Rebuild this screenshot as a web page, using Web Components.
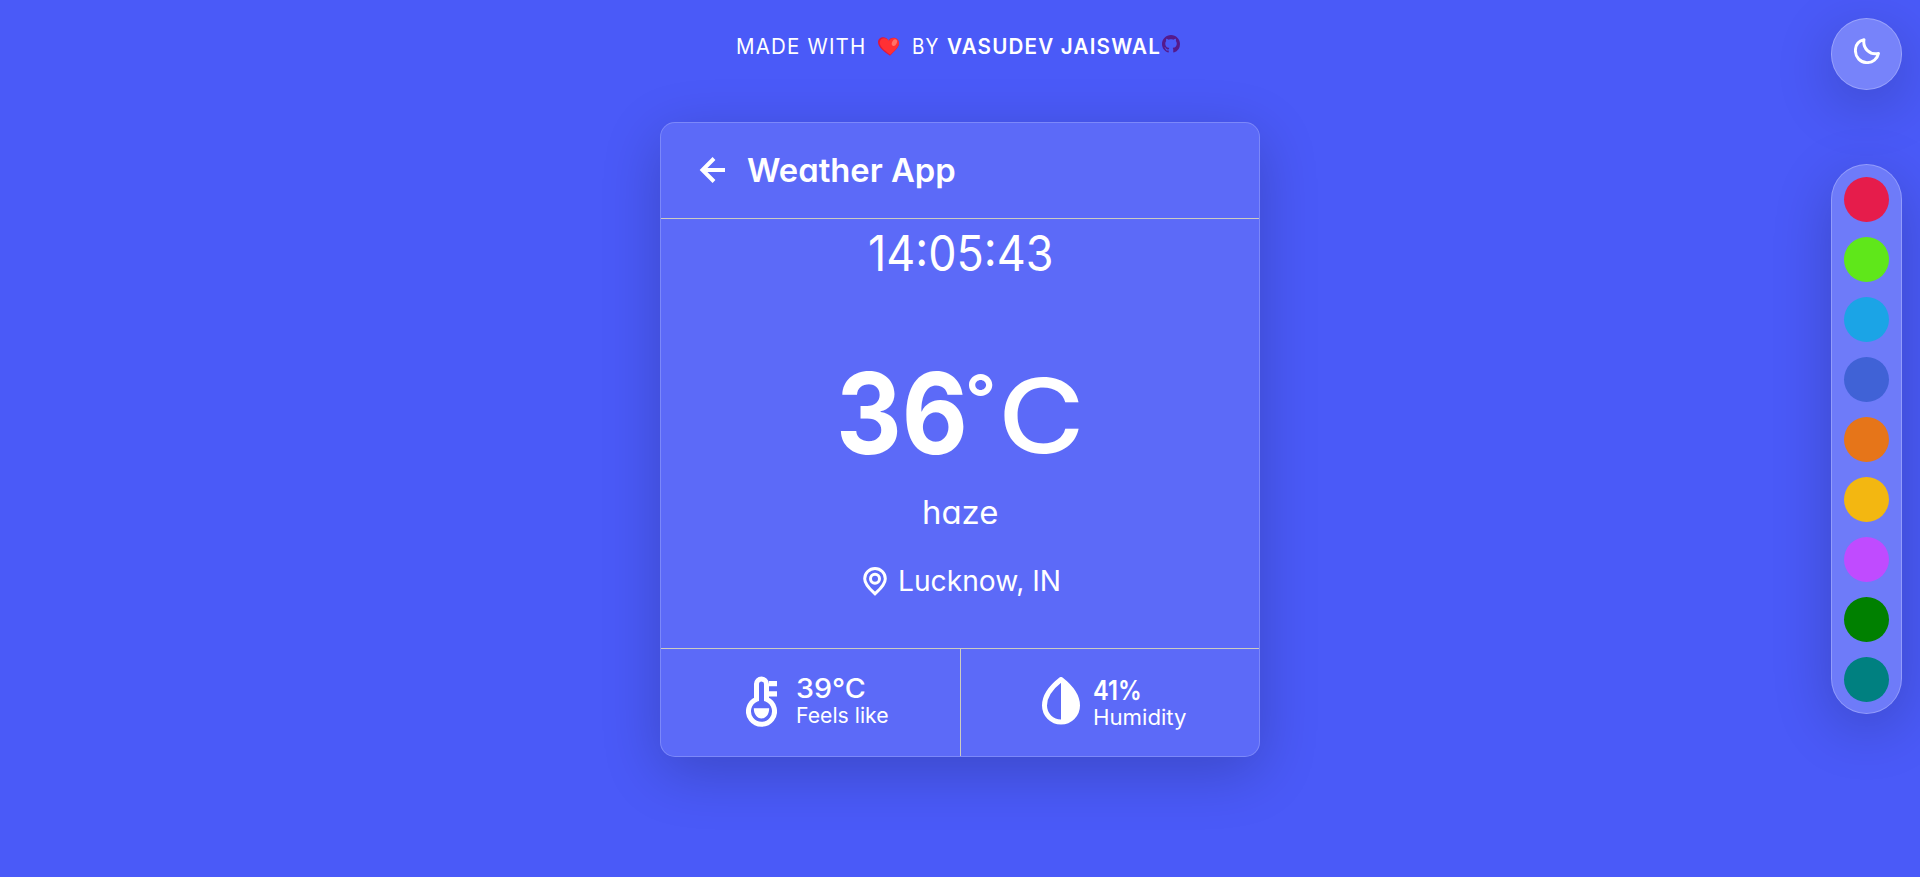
<!DOCTYPE html>
<html lang="en">
<head>
<meta charset="utf-8">
<title>Weather App</title>
<style>
html,body{margin:0;height:100%;overflow:hidden;background:#4a5af8;color:#fff;font-family:Inter,"Open Sans",sans-serif;font-feature-settings:"cv11";}
</style>
</head>
<body>
<weather-page></weather-page>
<script>
const define=(name,html,after)=>customElements.define(name,class extends HTMLElement{
  constructor(){super();this.attachShadow({mode:"open"}).innerHTML=html;}
  connectedCallback(){if(after)after(this);}
});

/* One line of text stretched to the width given in its w attribute. */
define("fit-text",`<style>:host{display:block;white-space:nowrap;overflow:visible;flex:none}
span{display:inline-block;transform-origin:0 50%}</style><span><slot></slot></span>`,el=>{
  const w=+el.getAttribute("w");
  el.style.width=w+"px";
  const s=el.shadowRoot.querySelector("span");
  s.style.transform="scaleX("+(w/s.offsetWidth)+")";
});

define("page-credit",`<style>
:host{display:flex;justify-content:flex-start;height:122px;box-sizing:border-box;padding:30px 0 0 736px;font-size:21px;line-height:34px;letter-spacing:1.200px}
.heart{width:21px;height:19px;margin:7px 13px 0 12px}
b{font-weight:600}.git{width:18px;height:18px;margin:5px 0 0 1px}
fit-text+fit-text{margin-left:8px}
</style>
<fit-text w="130">MADE WITH</fit-text>
<svg class="heart" viewBox="0 0 21 19"><path d="M10.5 4C12.300-1 21 0 21 6.500 20.800 11 15 15.500 12 18.700 8 16 0 11 0 5.300 0-.5 8.500-1.500 10.500 4z" fill="#dd173f"/><path d="M11 4C12.800-.6 20.800 0 21 6.300 20.700 11 15.200 14.500 12.400 17.700 9 15 1.800 11 1.700 5.500 2 0 9 0 11 4z" fill="#ff3034"/><ellipse cx="16.400" cy="5.700" rx="2.300" ry="3.500" transform="rotate(28 16.400 5.700)" fill="#ff7268"/></svg>
<fit-text w="27">BY</fit-text>
<fit-text w="214"><b>VASUDEV JAISWAL</b></fit-text>
<svg class="git" viewBox="0 0 16 16" fill="#551a8b"><path d="M8 0C3.580 0 0 3.580 0 8c0 3.540 2.290 6.530 5.470 7.590.4.070.55-.17.55-.38 0-.19-.01-.82-.01-1.490-2.010.37-2.530-.49-2.690-.94-.09-.23-.48-.94-.82-1.130-.28-.15-.68-.52-.01-.53.63-.01 1.080.58 1.230.82.72 1.210 1.870.87 2.330.66.070-.52.280-.87.510-1.070-1.780-.2-3.640-.89-3.640-3.950 0-.87.310-1.590.82-2.150-.08-.2-.36-1.020.08-2.120 0 0 .67-.21 2.200.82.640-.18 1.320-.27 2-.27s1.360.09 2 .27c1.530-1.040 2.200-.82 2.200-.82.44 1.100.16 1.920.08 2.120.51.56.82 1.270.82 2.150 0 3.070-1.870 3.750-3.650 3.950.29.25.54.73.54 1.480 0 1.070-.01 1.930-.01 2.200 0 .21.15.46.55.38A8.010 8.010 0 0 0 16 8c0-4.420-3.580-8-8-8z"/></svg>`);

define("weather-head",`<style>
:host{display:flex;height:95px;border-bottom:1px solid #cccbc0;padding-left:38px;font-size:32px;font-weight:600;line-height:40px}
svg{width:26px;height:26px;margin:34px 22px 0 0}
fit-text{margin-top:28px}
</style>
<svg viewBox="0 0 26 26" fill="none" stroke="#fff" stroke-width="4"><path d="M26 13H4M15 1.500 3.500 13 15 24.500"/></svg>
<fit-text w="209">Weather App</fit-text>`);

define("weather-now",`<style>
:host{display:flex;flex-direction:column;align-items:center;height:429px;border-bottom:1px solid #cccbc0}
.time{font-size:49px;line-height:60px;margin-top:5px;height:60px}
.temp{display:flex;margin-top:59px;height:140px;line-height:140px;align-items:flex-start}
.n{font-size:112px;font-weight:700}
.c{font-size:103px;font-weight:500;line-height:146px}
.desc{font-size:32px;line-height:40px;margin-top:10px}
.loc{display:flex;margin-top:29px;font-size:28px;line-height:36px;padding-left:3px}
.loc svg{width:24px;height:29px;margin:5px 11px 0 0}
.loc fit-text{margin-top:1px}
.d{font-size:66px;font-weight:600;line-height:80px;margin:15px 2px 0 -3px}
</style>
<fit-text class="time" w="185">14:05:43</fit-text>
<div class="temp"><fit-text class="n" w="132">36</fit-text><fit-text class="d" w="31">°</fit-text><fit-text class="c" w="87">C</fit-text></div>
<fit-text class="desc" w="76">haze</fit-text>
<div class="loc"><svg viewBox="0 0 24 29" fill="none" stroke="#fff" stroke-width="3"><path d="M12 26.800C8 23 1.700 18 1.700 11.700a10.300 10.200 0 0 1 20.600 0C22.300 18 16 23 12 26.800z"/><circle cx="12" cy="11.700" r="4.500"/></svg><fit-text w="163">Lucknow, IN</fit-text></div>`);

define("weather-detail",`<style>
:host{display:flex;flex:1;box-sizing:border-box;height:107px}
</style><slot name="icon"></slot><div><slot></slot></div>`);

define("weather-card",`<style>
:host{display:block;box-sizing:border-box;width:600px;height:635px;margin:0 auto;border:1px solid rgba(255,255,255,.2);border-radius:15px;background:rgba(255,255,255,.1);box-shadow:0 15px 60px rgba(0,0,0,.2)}
.details{display:flex;height:107px}
weather-detail:first-of-type{border-right:1px solid #cccbc0;padding-left:85px;padding-top:24px;flex:0 0 300px}
weather-detail:last-of-type{padding-left:81px;padding-top:26px}
svg{display:block}
.th{width:31px;height:52px;margin:3px 19px 0 0}
.dr{width:38px;height:48px;margin:2px 13px 0 0}
.v{font-size:27px;font-weight:500;line-height:32px;height:29px}
.l{font-size:21px;line-height:28px}
</style>
<weather-head></weather-head><weather-now></weather-now>
<div class="details">
<weather-detail><svg slot="icon" class="th" viewBox="0 0 31 52"><path d="M23 5h8v5.200h-8zM19 15.200h12v5.200H19z" fill="#fff"/><path d="M10.500 23.300V8a5 5 0 0 1 10 0v15.300a13 13 0 1 1-10 0z" fill="none" stroke="#fff" stroke-width="5"/><path d="M7.800 32.300h15.400c0 6-3.200 10.200-7.700 10.200s-7.700-4.200-7.700-10.200z" fill="#fff"/></svg><fit-text class="v" w="70">39°C</fit-text><fit-text class="l" w="93">Feels like</fit-text></weather-detail>
<weather-detail><svg slot="icon" class="dr" viewBox="0 0 38 48"><path d="M19 2.500C10 9.500 2.500 19 2.500 28.500a16.500 16.500 0 0 0 33 0C35.500 19 28 9.500 19 2.500z" fill="none" stroke="#fff" stroke-width="5" stroke-linejoin="round"/><path d="M19 2c10 8 17 17 17 27a17 17 0 0 1-17 16z" fill="#fff"/></svg><fit-text class="v" style="font-weight:600" w="49">41%</fit-text><fit-text class="l" w="94">Humidity</fit-text></weather-detail>
</div>`);

define("theme-toggle",`<style>
:host{display:flex;box-sizing:border-box;width:71px;height:72px;border:1px solid rgba(255,255,255,.25);border-radius:36px;background:rgba(255,255,255,.25);box-shadow:0 15px 60px rgba(0,0,0,.2);padding:19px 0 0 22px}
svg{width:26px;height:26px}
</style><svg viewBox="0 0 26 26" fill="none" stroke="#fff" stroke-width="2.900" stroke-linejoin="round"><path d="M10 1.600C4.500 3 1.400 7 1.400 12.400c0 7 5 12.200 11.600 12.200 5.600 0 10.400-3.600 11.500-9.200C16 17.500 8.500 10.500 10 1.600z"/></svg>`);

define("theme-palette",`<style>
:host{display:flex;flex-direction:column;align-items:center;gap:15px;box-sizing:border-box;width:71px;height:550px;margin-top:74px;padding-top:12px;border:1px solid rgba(255,255,255,.25);border-radius:36px;background:rgba(255,255,255,.2);box-shadow:0 15px 60px rgba(0,0,0,.2)}
i{width:45px;height:45px;border-radius:50%;flex:none}
</style>`+["#e61c4b","#5fe71a","#1ba4e6","#4062d6","#e67519","#f3b711","#c04bff","#008000","#008080"].map(c=>`<i style="background:${c}"></i>`).join(""));

define("weather-page",`<style>
:host{display:grid;grid-template-columns:1920px;height:877px;overflow:hidden}
main,aside{grid-area:1/1}
aside{justify-self:end;padding:18px 18px 0 0}
</style><main><page-credit></page-credit><weather-card></weather-card></main><aside><theme-toggle></theme-toggle><theme-palette></theme-palette></aside>`);
</script>
</body>
</html>
